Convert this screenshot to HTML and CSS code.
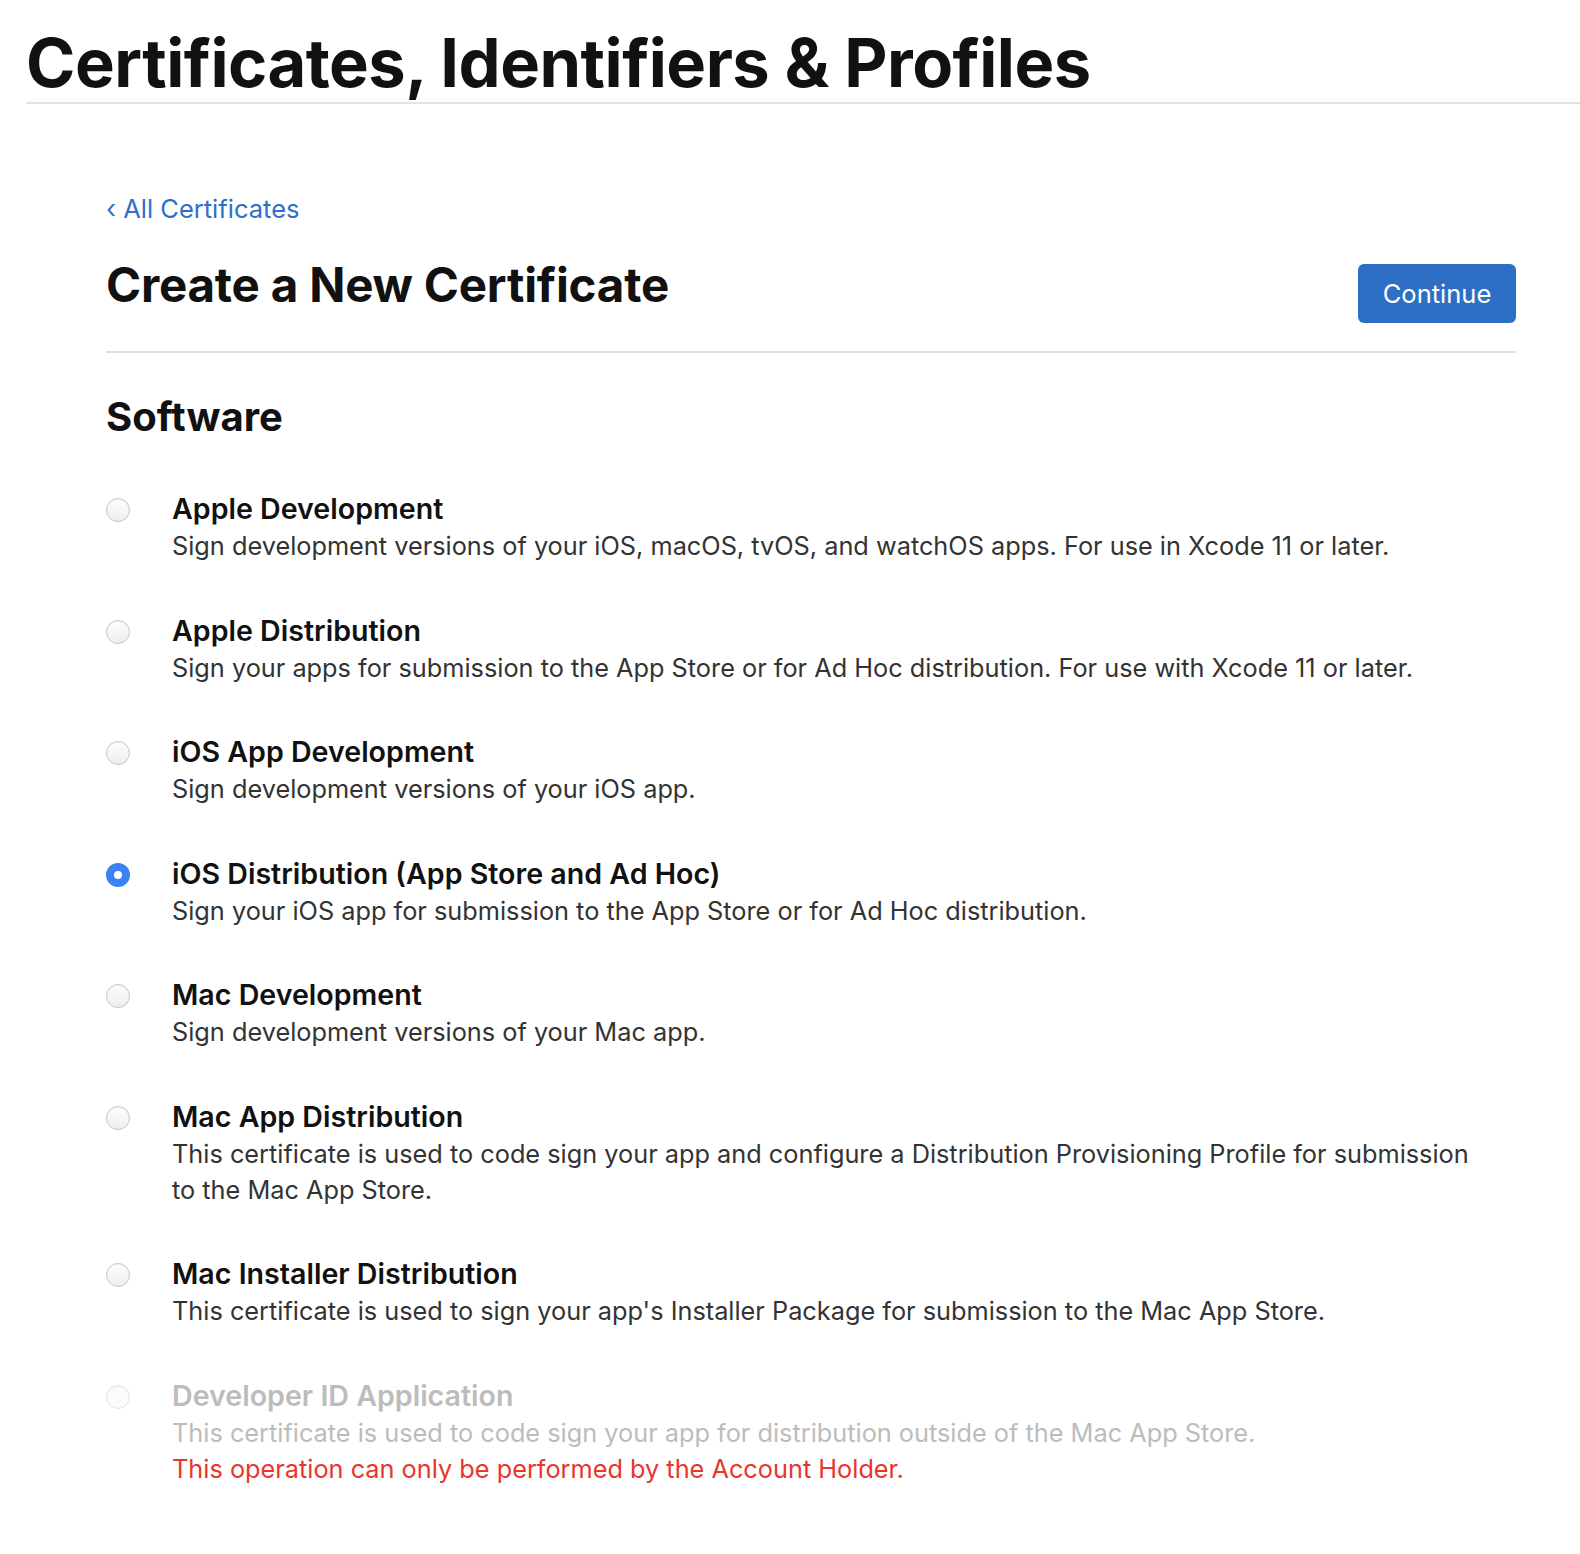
FILE: index.html
```html
<!DOCTYPE html>
<html>
<head>
<meta charset="utf-8">
<link rel="stylesheet" href="styles.css">
</head>
<body>
<header class="top">
  <h1 class="top-title">Certificates, Identifiers &amp; Profiles</h1>
</header>
<main class="content">
  <a class="back" href="#"><span class="chev">‹</span> All Certificates</a>
  <div class="head-row">
    <h2 class="page-title">Create a New Certificate</h2>
    <button class="btn">Continue</button>
  </div>
  <h3 class="section">Software</h3>
  <ul class="options">
    <li class="opt">
      <span class="radio"></span>
      <div class="opt-text">
        <div class="opt-title">Apple Development</div>
        <div class="opt-desc">Sign development versions of your iOS, macOS, tvOS, and watchOS apps. For use in Xcode 11 or later.</div>
      </div>
    </li>
    <li class="opt">
      <span class="radio"></span>
      <div class="opt-text">
        <div class="opt-title">Apple Distribution</div>
        <div class="opt-desc">Sign your apps for submission to the App Store or for Ad Hoc distribution. For use with Xcode 11 or later.</div>
      </div>
    </li>
    <li class="opt">
      <span class="radio"></span>
      <div class="opt-text">
        <div class="opt-title">iOS App Development</div>
        <div class="opt-desc">Sign development versions of your iOS app.</div>
      </div>
    </li>
    <li class="opt">
      <span class="radio checked"></span>
      <div class="opt-text">
        <div class="opt-title">iOS Distribution (App Store and Ad Hoc)</div>
        <div class="opt-desc">Sign your iOS app for submission to the App Store or for Ad Hoc distribution.</div>
      </div>
    </li>
    <li class="opt">
      <span class="radio"></span>
      <div class="opt-text">
        <div class="opt-title">Mac Development</div>
        <div class="opt-desc">Sign development versions of your Mac app.</div>
      </div>
    </li>
    <li class="opt">
      <span class="radio"></span>
      <div class="opt-text">
        <div class="opt-title">Mac App Distribution</div>
        <div class="opt-desc">This certificate is used to code sign your app and configure a Distribution Provisioning Profile for submission to the Mac App Store.</div>
      </div>
    </li>
    <li class="opt">
      <span class="radio"></span>
      <div class="opt-text">
        <div class="opt-title">Mac Installer Distribution</div>
        <div class="opt-desc">This certificate is used to sign your app's Installer Package for submission to the Mac App Store.</div>
      </div>
    </li>
    <li class="opt disabled">
      <span class="radio"></span>
      <div class="opt-text">
        <div class="opt-title">Developer ID Application</div>
        <div class="opt-desc">This certificate is used to code sign your app for distribution outside of the Mac App Store.</div>
        <div class="opt-error">This operation can only be performed by the Account Holder.</div>
      </div>
    </li>
  </ul>
</main>
</body>
</html>
```

FILE: styles.css
```css
html, body {
  margin: 0;
  padding: 0;
  background: #fff;
}
body {
  font-family: Inter, "Noto Sans", "Liberation Sans", sans-serif;
  color: #111;
}
.top {
  margin-left: 26px;
  border-bottom: 2px solid #e3e3e3;
}
.top-title {
  margin: 0;
  padding-top: 23px;
  font-size: 66.8px;
  line-height: 79px;
  font-weight: 700;
  letter-spacing: -0.5px;
  color: #111;
}
.content {
  margin-left: 106px;
  width: 1410px;
  padding-top: 88px;
}
.back {
  display: inline-block;
  font-size: 25.5px;
  line-height: 34px;
  color: #2f70c7;
  text-decoration: none;
}
.chev {
  font-size: 26px;
}
.head-row {
  display: flex;
  justify-content: space-between;
  align-items: flex-start;
  padding-top: 31px;
  padding-bottom: 28px;
  border-bottom: 2px solid #dedede;
}
.page-title {
  margin: 0;
  font-size: 47.5px;
  line-height: 56px;
  font-weight: 700;
  letter-spacing: -0.2px;
}
.btn {
  margin-top: 7px;
  width: 158px;
  height: 59px;
  border: none;
  border-radius: 6px;
  background: #2d6fc5;
  color: #fff;
  font-family: inherit;
  font-size: 25.5px;
  padding: 0;
}
.section {
  margin: 40px 0 0;
  font-size: 40px;
  line-height: 48px;
  font-weight: 700;
}
.options {
  list-style: none;
  margin: 49px 0 0;
  padding: 0;
}
.opt {
  display: flex;
  align-items: flex-start;
  margin-bottom: 47.5px;
}
.radio {
  flex: none;
  box-sizing: border-box;
  width: 24px;
  height: 24px;
  margin-top: 8px;
  margin-right: 42px;
  border-radius: 50%;
  border: 1px solid #c6c6c6;
  background: linear-gradient(#fdfdfd, #eeeeee);
  box-shadow: inset 0 1px 1px rgba(0,0,0,0.04);
}
.radio.checked {
  border: none;
  background: #3b82f4;
  display: flex;
  align-items: center;
  justify-content: center;
}
.radio.checked::after {
  content: "";
  width: 8px;
  height: 8px;
  border-radius: 50%;
  background: #fff;
}
.opt-title {
  font-size: 28.6px;
  line-height: 38px;
  font-weight: 600;
  color: #111;
}
.opt-desc {
  font-size: 25.3px;
  line-height: 36px;
  color: #333;
  max-width: 1305px;
}
.opt.disabled .radio {
  border-color: #e4e4e4;
  background: #fbfbfb;
}
.opt.disabled .opt-title,
.opt.disabled .opt-desc {
  color: #bcbcbc;
}
.opt-error {
  font-size: 25.3px;
  line-height: 36px;
  color: #e8362c;
}
```
